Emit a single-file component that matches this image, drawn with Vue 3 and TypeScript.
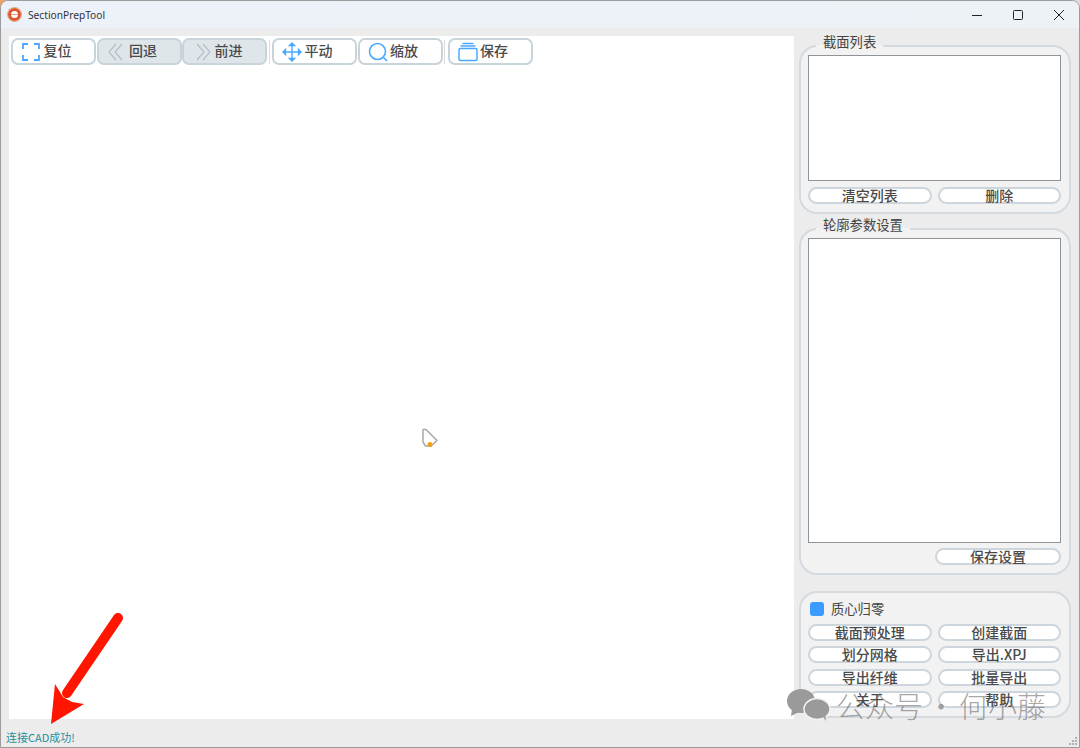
<script setup lang="ts">
const toolButtons = [
  { icon: 'reset', label: '复位' },
  { icon: 'back', label: '回退', off: true },
  { icon: 'forward', label: '前进', off: true },
  { sep: true },
  { icon: 'pan', label: '平动' },
  { icon: 'zoom', label: '缩放' },
  { sep: true },
  { icon: 'save', label: '保存' },
]

const actions = ['截面预处理', '创建截面', '划分网格', '导出.XPJ', '导出纤维', '批量导出', '关于', '帮助']
</script>

<template>
  <div class="window">
    <header class="titlebar">
      <span class="logo"></span>
      <span class="title">SectionPrepTool</span>
      <div class="controls">
        <svg width="12" height="12" viewBox="0 0 12 12"><path d="M1 6.5h10" stroke="#222" fill="none" /></svg>
        <svg width="12" height="12" viewBox="0 0 12 12"><rect x="1.5" y="1.5" width="9" height="9" rx="1" stroke="#222" fill="none" /></svg>
        <svg width="12" height="12" viewBox="0 0 12 12"><path d="M1 1l10 10M11 1L1 11" stroke="#222" fill="none" /></svg>
      </div>
    </header>

    <div class="main">
      <div class="canvas">
        <div class="toolbar">
          <template v-for="(b, i) in toolButtons" :key="i">
            <span v-if="b.sep" class="sep"></span>
            <button v-else class="tool" :class="{ off: b.off }">
              <svg v-if="b.icon === 'reset'" width="20" height="20" viewBox="0 0 20 20" fill="none" stroke="#4aa8ff" stroke-width="1.8">
                <path d="M2 7V2h5M13 2h5v5M18 13v5h-5M7 18H2v-5" />
              </svg>
              <svg v-else-if="b.icon === 'back'" width="20" height="20" viewBox="0 0 20 20" fill="none" stroke="#b4c0c8" stroke-width="1.2">
                <path d="M9 2L2 10l7 8M15 2l-7 8 7 8" />
              </svg>
              <svg v-else-if="b.icon === 'forward'" width="20" height="20" viewBox="0 0 20 20" fill="none" stroke="#b4c0c8" stroke-width="1.2">
                <path d="M5 2l7 8-7 8M11 2l7 8-7 8" />
              </svg>
              <svg v-else-if="b.icon === 'pan'" width="20" height="20" viewBox="0 0 20 20" fill="none" stroke="#4aa8ff" stroke-width="1.4">
                <path d="M10 1v18M1 10h18" />
                <path d="M7.500 3.500L10 1l2.500 2.500zM7.500 16.500L10 19l2.500-2.500zM3.500 7.500L1 10l2.500 2.500zM16.500 7.500L19 10l-2.500 2.500z" fill="#4aa8ff" />
              </svg>
              <svg v-else-if="b.icon === 'zoom'" width="20" height="20" viewBox="0 0 20 20" fill="none" stroke="#4aa8ff" stroke-width="1.6">
                <circle cx="9.500" cy="9.500" r="8" />
                <path d="M15 15l4 4" />
              </svg>
              <svg v-else width="20" height="20" viewBox="0 0 20 20" fill="none" stroke="#4aa8ff" stroke-width="1.500">
                <rect x="1" y="6.500" width="18" height="12" rx="1.500" />
                <path d="M2.500 4h15M4.500 1.500h11" />
              </svg>
              <span class="tool-label">{{ b.label }}</span>
            </button>
          </template>
        </div>
      </div>

      <aside class="side">
        <fieldset class="group">
          <legend>截面列表</legend>
          <div class="listbox short"></div>
          <div class="btn-row">
            <button class="btn">清空列表</button>
            <button class="btn">删除</button>
          </div>
        </fieldset>

        <fieldset class="group second">
          <legend>轮廓参数设置</legend>
          <div class="listbox tall"></div>
          <div class="btn-row save-row">
            <span></span>
            <button class="btn">保存设置</button>
          </div>
        </fieldset>

        <div class="group actions">
          <label class="check"><span class="box"></span><span class="check-label">质心归零</span></label>
          <div class="action-grid">
            <button v-for="a in actions" :key="a" class="btn">{{ a }}</button>
          </div>
        </div>
      </aside>
    </div>

    <footer class="status">连接CAD成功!</footer>

    <!-- annotation and watermark sit on top of the screenshot -->
    <svg class="arrow" width="90" height="125" viewBox="0 0 90 125">
      <path d="M73 13L22 88" stroke="#ff1500" stroke-width="10" stroke-linecap="round" fill="none" />
      <path d="M6 119L10 79 18 92 27 97 39 99z" fill="#ff1500" />
    </svg>

    <svg class="cursor" width="20" height="22" viewBox="0 0 20 22">
      <path d="M4 2.500h3l11 11-6 5.500H6.500L4 15z" fill="#fff" stroke="#a8a8a8" stroke-width="1.500" stroke-linejoin="round" />
      <circle cx="11" cy="17.500" r="2.500" fill="#f0a010" />
    </svg>

    <div class="watermark">
      <svg width="46" height="32" viewBox="0 0 46 32" fill="#9a9a9a">
        <ellipse cx="15" cy="12" rx="14" ry="12" />
        <path d="M6 20l-1 7 8-4z" />
        <ellipse cx="31" cy="20" rx="13" ry="10.500" stroke="#f2f2f2" stroke-width="1.500" />
        <path d="M37 28l3 4-1-7z" />
      </svg>
      <span class="wm-a">公众号</span>
      <span class="wm-dot">·</span>
      <span class="wm-b">何小藤</span>
    </div>

    <svg class="grip" width="10" height="10" viewBox="0 0 10 10" fill="#b0b0b0">
      <rect x="7" y="1" width="2" height="2" />
      <rect x="4" y="4" width="2" height="2" />
      <rect x="7" y="4" width="2" height="2" />
      <rect x="1" y="7" width="2" height="2" />
      <rect x="4" y="7" width="2" height="2" />
      <rect x="7" y="7" width="2" height="2" />
    </svg>
  </div>
</template>

<style>
html,
body {
  margin: 0;
  background: linear-gradient(90deg, #e8a468 50%, #dcdcdc 50%);
}
</style>

<style scoped>
.window {
  position: relative;
  width: 1080px;
  height: 748px;
  box-sizing: border-box;
  display: flex;
  flex-direction: column;
  overflow: hidden;
  background: #ececec;
  border: 1px solid #9c9c9c;
  border-radius: 8px 8px 0 0;
  font-family: "Noto Sans CJK SC", sans-serif;
  color: #444;
}

.titlebar {
  flex: none;
  height: 27px;
  display: flex;
  align-items: center;
  background: linear-gradient(90deg, #edf1f9, #edf2f7);
}

.logo {
  width: 7px;
  height: 7px;
  margin-left: 7px;
  border: 3px solid #e0562c;
  border-radius: 50%;
  background: linear-gradient(#fff 42%, #ef9a80 42%, #ef9a80 60%, #fff 60%);
  box-shadow: 0 0 0 1px #d9b08c;
}

.title {
  margin-left: 7px;
  font: 10.200px "Noto Sans", sans-serif;
  color: #333;
}

.controls {
  margin-left: auto;
  display: flex;
  gap: 29px;
  padding-right: 14px;
}

.main {
  flex: 1;
  display: flex;
  padding: 8px 0 0 8px;
  min-height: 0;
}

.canvas {
  width: 785px;
  background: #fff;
  padding: 2px;
  box-sizing: border-box;
}

.toolbar {
  display: flex;
  align-items: center;
  gap: 0.500px;
}

.tool {
  width: 85px;
  height: 27px;
  padding: 0 0 0 8px;
  display: flex;
  align-items: center;
  gap: 2.500px;
  box-sizing: border-box;
  border: 2px solid #c9d3da;
  border-radius: 7px;
  background: #fff;
  font: 500 14px "Noto Sans CJK SC", sans-serif;
  color: #4a4a4a;
}

.tool.off {
  background: #dfe6ea;
}

.tool-label {
  padding-bottom: 3px;
}

.sep {
  width: 1px;
  height: 24px;
  margin: 0 2px 0 1px;
  background: #dcdcdc;
}

.side {
  width: 272px;
  margin-left: 5px;
  padding-top: 1px;
  display: flex;
  flex-direction: column;
}

.group {
  margin: 0;
  padding: 0 8px 8px 7px;
  min-width: 0;
  border: 2px solid #d3dae0;
  border-radius: 18px;
  background: #f2f2f2;
}

.group legend {
  margin-left: 8px;
  padding: 0 7px 8px;
  height: 18px;
  box-sizing: border-box;
  font-size: 13.300px;
  line-height: 10px;
  color: #444;
}

.group.second {
  margin-top: 6px;
}

.listbox {
  box-sizing: border-box;
  background: #fff;
  border: 1px solid #8f949a;
}

.listbox.short {
  height: 126px;
  margin-bottom: 6px;
}

.listbox.tall {
  height: 305px;
  margin-bottom: 5px;
}

.btn-row {
  display: grid;
  grid-template-columns: 1fr 1fr;
  gap: 6px;
}

.btn-row.save-row {
  grid-template-columns: 1fr 126px;
}

.btn {
  height: 17px;
  padding: 0 0 1px;
  box-sizing: border-box;
  border: 2px solid #cdd6dc;
  border-radius: 9px;
  background: #fff;
  font: 500 14px/13px "Noto Sans CJK SC", sans-serif;
  color: #4a4a4a;
}

.actions {
  margin-top: 16px;
  height: 127px;
  box-sizing: border-box;
  padding: 8px 8px 0 7px;
}

.check {
  display: flex;
  align-items: center;
  gap: 7px;
  height: 16px;
  margin-left: 2px;
  font-size: 13.300px;
  color: #444;
}

.check-label {
  padding-bottom: 1px;
}

.box {
  width: 14px;
  height: 14px;
  border-radius: 3px;
  background: #3a9cff;
}

.action-grid {
  margin-top: 7px;
  display: grid;
  grid-template-columns: 1fr 1fr;
  column-gap: 6px;
  row-gap: 5.400px;
}

.status {
  flex: none;
  height: 28px;
  padding: 10px 0 0 5px;
  box-sizing: border-box;
  font-size: 11px;
  line-height: 16px;
  color: #1f8f9c;
}

.arrow {
  position: absolute;
  left: 44px;
  top: 604px;
}

.cursor {
  position: absolute;
  left: 418px;
  top: 426px;
}

.watermark {
  position: absolute;
  left: 785px;
  top: 687px;
  display: flex;
  align-items: center;
  height: 34px;
  font-weight: 300;
  font-size: 29px;
  line-height: 34px;
  color: rgba(110, 110, 110, 0.62);
}

.wm-a {
  margin-left: 4px;
}

.wm-dot {
  width: 36px;
  text-align: center;
}

.grip {
  position: absolute;
  right: 1px;
  bottom: 1px;
}
</style>
